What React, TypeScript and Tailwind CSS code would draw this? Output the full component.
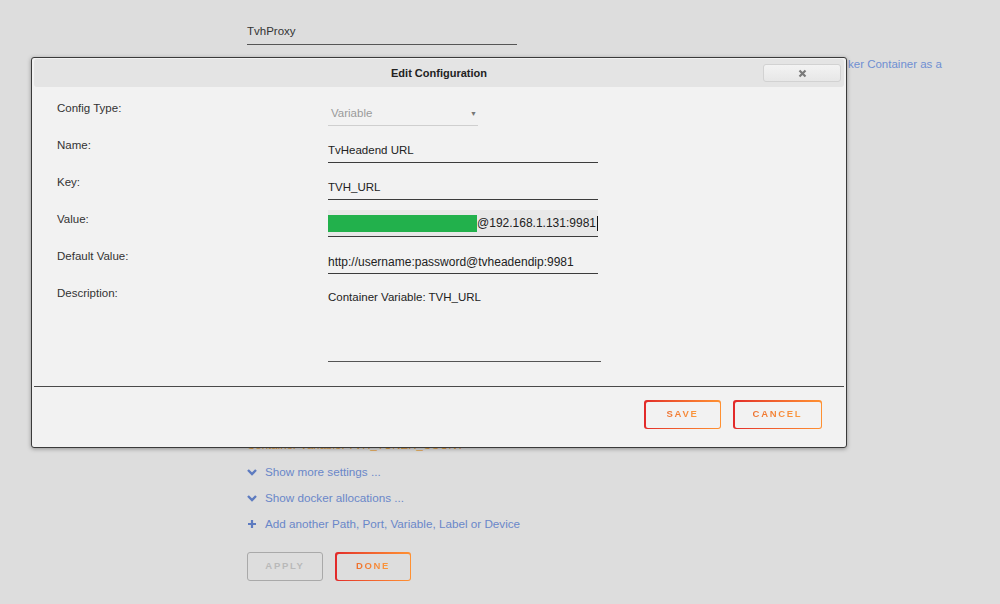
import React from "react";

const font = { fontFamily: '"Liberation Sans", Arial, sans-serif' };

const GradButton: React.FC<{ label: string; width: string; bg: string }> = ({
  label,
  width,
  bg,
}) => (
  <div
    className={`h-[29px] ${width} rounded-[3px] bg-linear-to-r from-[#e2282a] to-[#ff9132] p-[1.5px]`}
  >
    <div
      className={`flex h-full w-full items-center justify-center rounded-[2px] ${bg}`}
    >
      <span className="bg-linear-to-r from-[#ee6f2c] to-[#fb9a3e] bg-clip-text text-[9.5px] font-bold tracking-[1.7px] text-transparent">
        {label}
      </span>
    </div>
  </div>
);

const Field: React.FC<{ children: React.ReactNode; size?: string }> = ({
  children,
  size = "text-[11.5px]",
}) => (
  <div
    className={`flex h-[27px] w-[270px] items-center border-b border-[#3c3c3c] pt-[3px] ${size} text-[#222]`}
  >
    {children}
  </div>
);

const rows = [
  { label: "Name:", value: "TvHeadend URL" },
  { label: "Key:", value: "TVH_URL" },
];

const App: React.FC = () => {
  return (
    <div
      className="relative h-[604px] w-[1000px] overflow-hidden bg-[#dddddd] text-[#333]"
      style={font}
    >
      {/* page behind the dialog */}
      <div className="flex flex-col pl-[247px] pt-[20px]">
        <div className="flex h-[25px] w-[270px] items-center border-b border-[#555] text-[11.5px] text-[#333]">
          TvhProxy
        </div>
        <div className="ml-[601px] mt-[10px] text-[11.5px] leading-[18px] text-[#6f8fd2]">
          ker Container as a
        </div>
        <div className="h-[364px]" />
        <div className="text-[11.5px] leading-[16px] text-[#e39d3c]">
          Container Variable: TVH_TUNER_COUNT
        </div>
        <div className="mt-[6px] flex flex-col text-[11.7px] text-[#6a87c9]">
          <div className="flex h-[26px] items-center gap-[8px]">
            <svg width="10" height="8" viewBox="0 0 10 8">
              <path d="M1 2 L5 6 L9 2" fill="none" stroke="#5d7bc0" strokeWidth="2.4" />
            </svg>
            Show more settings ...
          </div>
          <div className="flex h-[26px] items-center gap-[8px]">
            <svg width="10" height="8" viewBox="0 0 10 8">
              <path d="M1 2 L5 6 L9 2" fill="none" stroke="#5d7bc0" strokeWidth="2.4" />
            </svg>
            Show docker allocations ...
          </div>
          <div className="flex h-[26px] items-center gap-[8px]">
            <svg width="10" height="10" viewBox="0 0 10 10">
              <path d="M5 1 V9 M1 5 H9" fill="none" stroke="#5d7bc0" strokeWidth="2.2" />
            </svg>
            Add another Path, Port, Variable, Label or Device
          </div>
        </div>
        <div className="mt-[15px] flex gap-[12px]">
          <div className="flex h-[29px] w-[76px] items-center justify-center rounded-[3px] border-[1.5px] border-[#a9a9a9]">
            <span className="text-[9.5px] font-bold tracking-[1.7px] text-[#b9b9b9]">
              APPLY
            </span>
          </div>
          <GradButton label="DONE" width="w-[76px]" bg="bg-[#dddddd]" />
        </div>
      </div>

      {/* modal dialog */}
      <div className="absolute left-[31px] top-[57px] flex h-[391px] w-[816px] flex-col rounded-[3px] border border-[#3a3a3a] bg-[#f2f2f2] shadow-[0_1px_4px_rgba(0,0,0,0.35)]">
        <div className="relative mx-[2px] mt-[1px] flex h-[28px] items-center justify-center rounded-[3px] bg-[#e4e4e4]">
          <span className="text-[11px] font-bold text-[#222]">
            Edit Configuration
          </span>
          <div className="absolute right-[3px] top-[5px] flex h-[18px] w-[78px] items-center justify-center rounded-[3px] border border-[#d2d2d2] bg-linear-to-b from-[#f3f3f3] to-[#e7e7e7]">
            <svg width="9" height="9" viewBox="0 0 9 9">
              <path d="M1.5 1.5 L7.5 7.5 M7.5 1.5 L1.5 7.5" stroke="#7a7a7a" strokeWidth="2.2" />
            </svg>
          </div>
        </div>

        <div className="grid grid-cols-[271px_1fr] pl-[25px] pt-[12px] text-[11.5px]">
          {/* config type */}
          <div className="h-[37px] leading-[18px] text-[#333]">Config Type:</div>
          <div className="h-[37px]">
            <div className="flex h-[27px] w-[150px] items-center justify-between border-b border-[#cfcfcf] pl-[3px] pr-[1px] pt-[4px] text-[#9a9a9a]">
              <span>Variable</span>
              <span className="text-[7px] text-[#777]">▼</span>
            </div>
          </div>

          {rows.map((r) => (
            <React.Fragment key={r.label}>
              <div className="h-[37px] leading-[18px] text-[#333]">{r.label}</div>
              <div className="h-[37px]">
                <Field>{r.value}</Field>
              </div>
            </React.Fragment>
          ))}

          {/* value */}
          <div className="h-[37px] leading-[18px] text-[#333]">Value:</div>
          <div className="h-[37px]">
            <div className="flex h-[27px] w-[270px] items-center border-b border-[#3c3c3c] bg-[#e8e8e8] text-[12px] text-[#222]">
              <div className="h-[17px] w-[150px] bg-[#22b14c]" />
              <span>@192.168.1.131:9981</span>
              <span className="ml-[1px] h-[15px] w-px bg-[#111]" />
            </div>
          </div>

          {/* default value */}
          <div className="h-[37px] leading-[18px] text-[#333]">Default Value:</div>
          <div className="h-[37px]">
            <Field size="text-[12px]">http://username:password@tvheadendip:9981</Field>
          </div>

          {/* description */}
          <div className="leading-[18px] text-[#333]">Description:</div>
          <div className="h-[78px] w-[273px] border-b border-[#555] pt-[5px] text-[#222]">
            Container Variable: TVH_URL
          </div>
        </div>

        <div className="mx-[2px] mt-[24px] h-px bg-[#4a4a4a]" />

        <div className="flex justify-end gap-[12px] pr-[24px] pt-[13px]">
          <GradButton label="SAVE" width="w-[77px]" bg="bg-[#f2f2f2]" />
          <GradButton label="CANCEL" width="w-[89px]" bg="bg-[#f2f2f2]" />
        </div>
      </div>
    </div>
  );
};

export default App;
